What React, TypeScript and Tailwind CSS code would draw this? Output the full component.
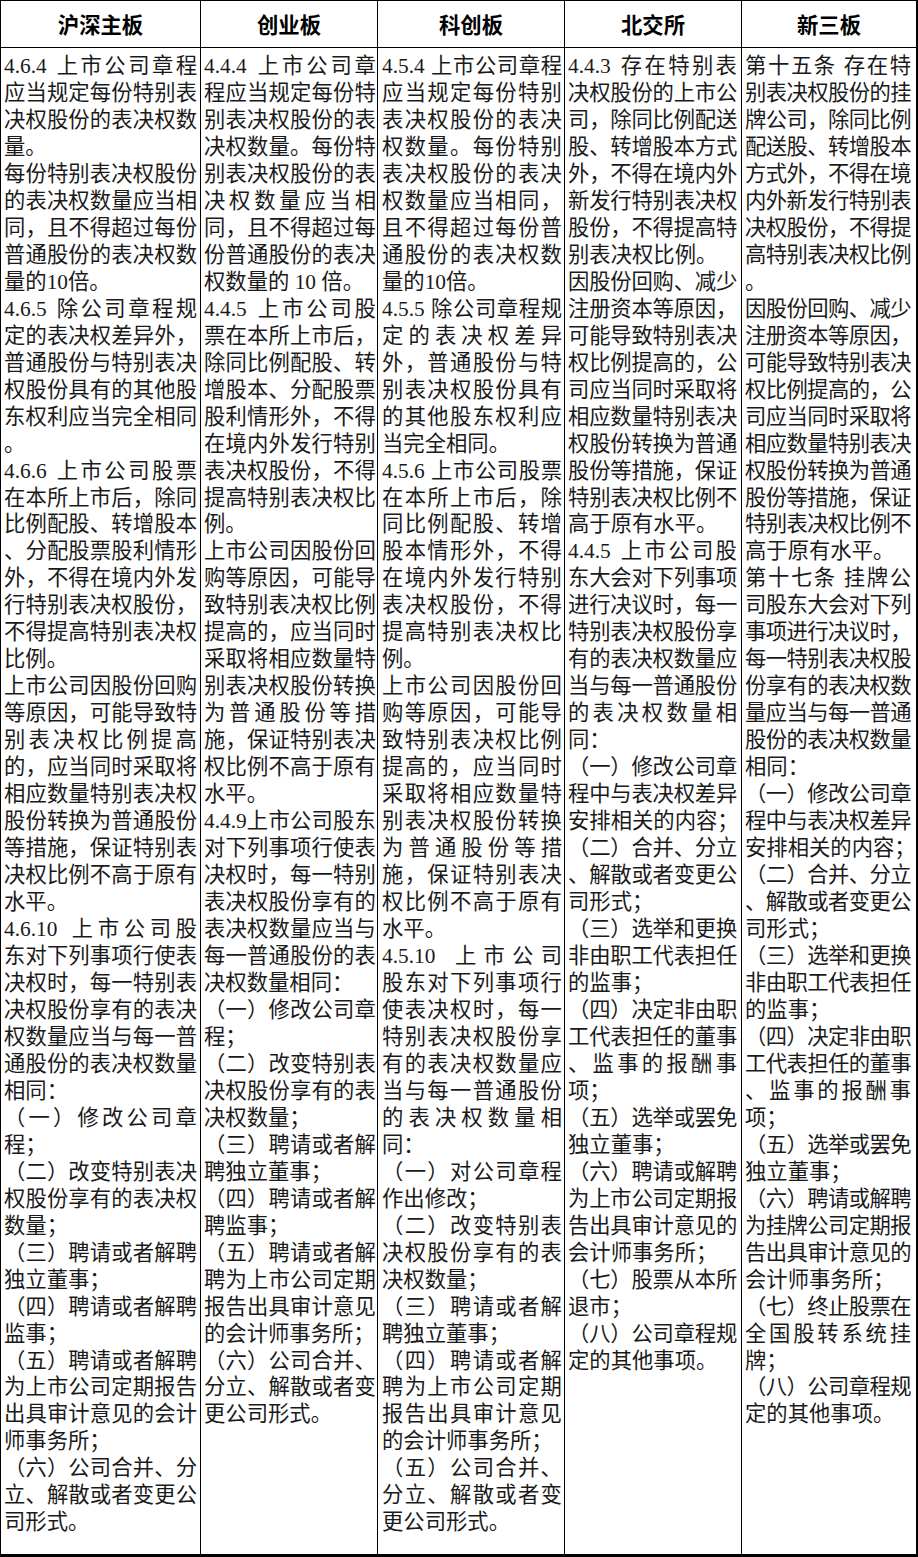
const columns = [
  {
    title: "沪深主板",
    pad: "pl-[3px] pr-[3px]",
    paras: [
      "4.6.4 上市公司章程|应当规定每份特别表|决权股份的表决权数|量。",
      "每份特别表决权股份|的表决权数量应当相|同，且不得超过每份|普通股份的表决权数|量的10倍。",
      "4.6.5 除公司章程规|定的表决权差异外，|普通股份与特别表决|权股份具有的其他股|东权利应当完全相同|。",
      "4.6.6 上市公司股票|在本所上市后，除同|比例配股、转增股本|、分配股票股利情形|外，不得在境内外发|行特别表决权股份，|不得提高特别表决权|比例。",
      "上市公司因股份回购|等原因，可能导致特|别表决权比例提高|的，应当同时采取将|相应数量特别表决权|股份转换为普通股份|等措施，保证特别表|决权比例不高于原有|水平。",
      "4.6.10 上市公司股|东对下列事项行使表|决权时，每一特别表|决权股份享有的表决|权数量应当与每一普|通股份的表决权数量|相同：",
      "（一）修改公司章|程；",
      "（二）改变特别表决|权股份享有的表决权|数量；",
      "（三）聘请或者解聘|独立董事；",
      "（四）聘请或者解聘|监事；",
      "（五）聘请或者解聘|为上市公司定期报告|出具审计意见的会计|师事务所；",
      "（六）公司合并、分|立、解散或者变更公|司形式。",
    ],
  },
  {
    title: "创业板",
    pad: "pl-[3px] pr-[1px]",
    paras: [
      "4.4.4 上市公司章|程应当规定每份特|别表决权股份的表|决权数量。每份特|别表决权股份的表|决权数量应当相|同，且不得超过每|份普通股份的表决|权数量的 10 倍。",
      "4.4.5 上市公司股|票在本所上市后，|除同比例配股、转|增股本、分配股票|股利情形外，不得|在境内外发行特别|表决权股份，不得|提高特别表决权比|例。",
      "上市公司因股份回|购等原因，可能导|致特别表决权比例|提高的，应当同时|采取将相应数量特|别表决权股份转换|为普通股份等措|施，保证特别表决|权比例不高于原有|水平。",
      "4.4.9上市公司股东|对下列事项行使表|决权时，每一特别|表决权股份享有的|表决权数量应当与|每一普通股份的表|决权数量相同：",
      "（一）修改公司章|程；",
      "（二）改变特别表|决权股份享有的表|决权数量；",
      "（三）聘请或者解|聘独立董事；",
      "（四）聘请或者解|聘监事；",
      "（五）聘请或者解|聘为上市公司定期|报告出具审计意见|的会计师事务所；",
      "（六）公司合并、|分立、解散或者变|更公司形式。",
    ],
  },
  {
    title: "科创板",
    pad: "pl-[4px] pr-[2px]",
    paras: [
      "4.5.4 上市公司章程|应当规定每份特别|表决权股份的表决|权数量。每份特别|表决权股份的表决|权数量应当相同，|且不得超过每份普|通股份的表决权数|量的10倍。",
      "4.5.5 除公司章程规|定的表决权差异|外，普通股份与特|别表决权股份具有|的其他股东权利应|当完全相同。",
      "4.5.6 上市公司股票|在本所上市后，除|同比例配股、转增|股本情形外，不得|在境内外发行特别|表决权股份，不得|提高特别表决权比|例。",
      "上市公司因股份回|购等原因，可能导|致特别表决权比例|提高的，应当同时|采取将相应数量特|别表决权股份转换|为普通股份等措|施，保证特别表决|权比例不高于原有|水平。",
      "4.5.10 上市公司|股东对下列事项行|使表决权时，每一|特别表决权股份享|有的表决权数量应|当与每一普通股份|的表决权数量相|同：",
      "（一）对公司章程|作出修改；",
      "（二）改变特别表|决权股份享有的表|决权数量；",
      "（三）聘请或者解|聘独立董事；",
      "（四）聘请或者解|聘为上市公司定期|报告出具审计意见|的会计师事务所；",
      "（五）公司合并、|分立、解散或者变|更公司形式。",
    ],
  },
  {
    title: "北交所",
    pad: "pl-[3px] pr-[4px]",
    paras: [
      "4.4.3 存在特别表|决权股份的上市公|司，除同比例配送|股、转增股本方式|外，不得在境内外|新发行特别表决权|股份，不得提高特|别表决权比例。",
      "因股份回购、减少|注册资本等原因，|可能导致特别表决|权比例提高的，公|司应当同时采取将|相应数量特别表决|权股份转换为普通|股份等措施，保证|特别表决权比例不|高于原有水平。",
      "4.4.5 上市公司股|东大会对下列事项|进行决议时，每一|特别表决权股份享|有的表决权数量应|当与每一普通股份|的表决权数量相|同：",
      "（一）修改公司章|程中与表决权差异|安排相关的内容；",
      "（二）合并、分立|、解散或者变更公|司形式；",
      "（三）选举和更换|非由职工代表担任|的监事；",
      "（四）决定非由职|工代表担任的董事|、监事的报酬事|项；",
      "（五）选举或罢免|独立董事；",
      "（六）聘请或解聘|为上市公司定期报|告出具审计意见的|会计师事务所；",
      "（七）股票从本所|退市；",
      "（八）公司章程规|定的其他事项。",
    ],
  },
  {
    title: "新三板",
    pad: "pl-[3px] pr-[5px]",
    paras: [
      "第十五条 存在特|别表决权股份的挂|牌公司，除同比例|配送股、转增股本|方式外，不得在境|内外新发行特别表|决权股份，不得提|高特别表决权比例|。",
      "因股份回购、减少|注册资本等原因，|可能导致特别表决|权比例提高的，公|司应当同时采取将|相应数量特别表决|权股份转换为普通|股份等措施，保证|特别表决权比例不|高于原有水平。",
      "第十七条 挂牌公|司股东大会对下列|事项进行决议时，|每一特别表决权股|份享有的表决权数|量应当与每一普通|股份的表决权数量|相同：",
      "（一）修改公司章|程中与表决权差异|安排相关的内容；",
      "（二）合并、分立|、解散或者变更公|司形式；",
      "（三）选举和更换|非由职工代表担任|的监事；",
      "（四）决定非由职|工代表担任的董事|、监事的报酬事|项；",
      "（五）选举或罢免|独立董事；",
      "（六）聘请或解聘|为挂牌公司定期报|告出具审计意见的|会计师事务所；",
      "（七）终止股票在|全国股转系统挂|牌；",
      "（八）公司章程规|定的其他事项。",
    ],
  },
];

// justified line: every glyph (or run of latin digits) is spread across the cell
function Line({ text, last }: { text: string; last: boolean }) {
  if (last) {
    return <div className="whitespace-pre">{text}</div>;
  }
  const tokens = text.match(/[0-9A-Za-z.]+|\s|[^\s]/gu) ?? [];
  return (
    <div className="flex justify-between">
      {tokens.map((t, i) =>
        t === " " ? (
          <span key={i} className="w-[0.25em]" />
        ) : (
          <span key={i} className="min-w-0 whitespace-nowrap">
            {t}
          </span>
        )
      )}
    </div>
  );
}

export default function App() {
  return (
    <div className="w-[918px] bg-white text-[#1a1a1a]">
      <div className="grid grid-cols-[200px_177px_187px_177px_176px] border-l border-t border-black">
        {columns.map((col, i) => (
          <div
            key={col.title}
            className={`flex h-[47px] items-center justify-center border-b border-black pt-[5px] font-['Liberation_Sans','Noto_Sans_CJK_SC',sans-serif] text-[21.33px] font-bold text-black ${
              i === 4 ? "border-r-2" : "border-r"
            }`}
          >
            {col.title}
          </div>
        ))}
        {columns.map((col, i) => (
          <div
            key={col.title + "-body"}
            className={`border-b-[3px] border-black pt-[5px] pb-[17.65px] font-['Liberation_Serif','Noto_Sans_CJK_SC',serif] text-[21.33px] leading-[26.97px] ${col.pad} ${
              i === 4 ? "border-r-2" : "border-r"
            }`}
          >
            {col.paras.map((p, j) => {
              const lines = p.split("|");
              return (
                <div key={j}>
                  {lines.map((l, k) => (
                    <Line key={k} text={l} last={k === lines.length - 1} />
                  ))}
                </div>
              );
            })}
          </div>
        ))}
      </div>
    </div>
  );
}
